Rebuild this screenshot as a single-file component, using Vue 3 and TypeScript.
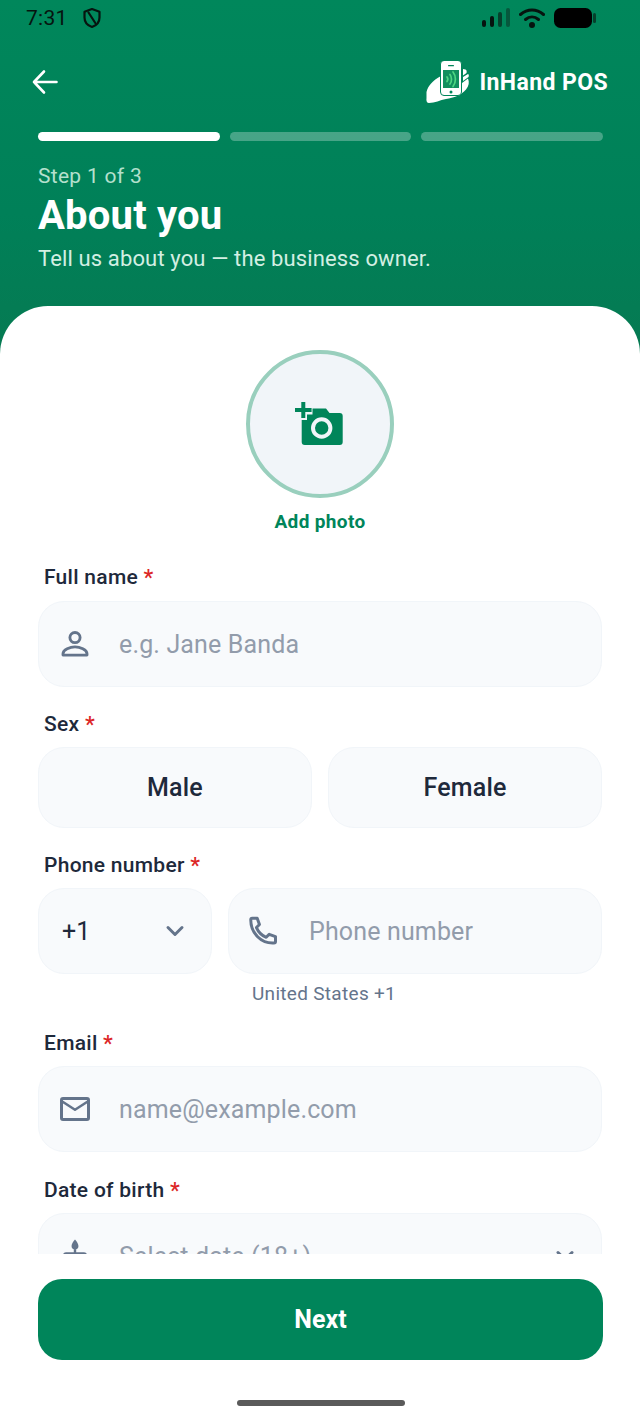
<script setup lang="ts">
const steps = [true, false, false]
</script>

<template>
  <div class="screen">
    <div class="scroll">
      <header class="hero">
        <div class="status">
          <div class="status-left">
            <span class="time">7:31</span>
            <svg class="shield" width="20" height="22" viewBox="0 0 20 22" fill="none" stroke="#06140f" stroke-width="2.2" stroke-linejoin="round">
              <path d="M10 2l7.500 2.800v5.600c0 4.600-3.100 8-7.500 9.600-4.400-1.600-7.500-5-7.500-9.600V4.800z" />
              <path d="M6.500 5.500l6.800 10.500" stroke-linecap="round" />
            </svg>
          </div>
          <div class="status-right">
            <svg width="28" height="20" viewBox="0 0 28 20">
              <rect x="0" y="12" width="4" height="7" rx="2" fill="#06140f" />
              <rect x="8" y="8" width="4" height="11" rx="2" fill="#06140f" />
              <rect x="16" y="4" width="4" height="15" rx="2" fill="#06402c" />
              <rect x="24" y="0" width="4" height="19" rx="2" fill="#06583d" />
            </svg>
            <svg width="26" height="20" viewBox="0 0 26 20" fill="none" stroke="#06140f" stroke-width="3" stroke-linecap="round">
              <path d="M1.500 6.500C8.500 .5 17.500 .5 24.500 6.500" />
              <path d="M6.500 11.500c4-3.400 9-3.400 13 0" />
              <circle cx="13" cy="17" r="1.500" fill="#06140f" />
            </svg>
            <svg width="42" height="20" viewBox="0 0 42 20">
              <rect x="0" y="0" width="38" height="20" rx="6.500" fill="#000" />
              <rect x="39" y="5" width="3" height="10" rx="1.500" fill="#06402c" />
            </svg>
          </div>
        </div>

        <div class="topbar">
          <svg class="back" width="26" height="26" viewBox="0 0 26 26" fill="none" stroke="#fff" stroke-width="2.600" stroke-linecap="round" stroke-linejoin="round">
            <path d="M24.500 13H2M12 2.500L2 13 12 23.500" />
          </svg>
          <div class="brand">
            <svg width="44" height="42" viewBox="0 0 44 42">
              <path d="M.5 31C2 25 6.500 19.500 15 15V30C15 33 17 35 20 35H27C30 35 32 34 35 31L36 22L42 17.500C43.500 21 43 25 40 28.500C35 34.500 28 36.500 20 38C14 39 9 42 3 42C1 42 0 40 .5 37Z" fill="#fff" />
              <path d="M37 8L39.500 8.500C40.500 9 41 10 40.500 12L37 14.500ZM37 16L42 13C43 13.500 43 15 42.500 16L37 20Z" fill="#fff" />
              <rect x="14.500" y="-.5" width="21" height="35" rx="3.500" fill="#fff" stroke="#00855a" stroke-width="1" />
              <rect x="17" y="9" width="16" height="18" fill="#128f5e" />
              <rect x="22" y="4" width="6" height="1.300" rx=".6" fill="#00855a" />
              <circle cx="25" cy="31" r="1.500" fill="#00855a" />
              <g fill="none" stroke="#4fd683" stroke-width="1.700" stroke-linecap="round">
                <path d="M21 16c1 1.200 1 3 0 4.500" />
                <path d="M24 13.500c2 2.800 2 7 0 9.500" />
                <path d="M27 11c3.200 4 3.200 10.500 0 14.500" />
              </g>
            </svg>
            <span class="brand-name">InHand POS</span>
          </div>
        </div>

        <div class="progress">
          <span v-for="(on, i) in steps" :key="i" class="seg" :class="{ on }"></span>
        </div>

        <p class="step">Step 1 of 3</p>
        <h1 class="title">About you</h1>
        <p class="sub">Tell us about you — the business owner.</p>
      </header>

      <main class="sheet">
        <div class="photo">
          <div class="avatar">
            <svg width="50" height="44" viewBox="0 0 50 44">
              <path d="M6.700 18H12V12.500H17.500V6.500H31L34.500 11H44.700A3 3 0 0 1 47.700 14V40A3 3 0 0 1 44.700 43H9.700A3 3 0 0 1 6.700 40Z" fill="#00855a" />
              <path d="M6.300 0H10.300V6H16.600V10H10.300V16H6.300V10H0V6H6.300Z" fill="#00855a" />
              <circle cx="26.700" cy="26" r="8.700" fill="none" stroke="#f1f5f9" stroke-width="4" />
            </svg>
          </div>
          <span class="photo-label">Add photo</span>
        </div>

        <label class="label">Full name <em>*</em></label>
        <div class="field">
          <svg class="ic" width="36" height="36" viewBox="0 0 24 24" fill="none" stroke="#64748b" stroke-width="1.900">
            <circle cx="12" cy="7.700" r="3.400" />
            <path d="M4 19.400v-.9c0-2.700 4.800-4.600 8-4.600s8 1.900 8 4.600v.9z" stroke-linejoin="round" />
          </svg>
          <span class="ph">e.g. Jane Banda</span>
        </div>

        <label class="label">Sex <em>*</em></label>
        <div class="choices">
          <button class="choice">Male</button>
          <button class="choice">Female</button>
        </div>

        <label class="label">Phone number <em>*</em></label>
        <div class="phone-row">
          <div class="field code">
            <span class="code-val">+1</span>
            <svg width="24" height="24" viewBox="0 0 24 24" fill="none" stroke="#64748b" stroke-width="3" stroke-linecap="round" stroke-linejoin="round">
              <path d="M5 8.500l7 7 7-7" />
            </svg>
          </div>
          <div class="phone-col">
            <div class="field">
              <svg class="ic" width="36" height="36" viewBox="0 0 24 24" fill="none" stroke="#64748b" stroke-width="2" stroke-linejoin="round">
                <path transform="translate(-1 0)" d="M4.500 3.500h3.300l1.500 4.200-2 2c1.200 2.800 3.700 5.300 6.500 6.500l2-2 4.200 1.500v3.300c0 .6-.4 1-1 1C10.500 20.500 3.500 13.500 3.500 4.500c0-.6.4-1 1-1z" />
              </svg>
              <span class="ph">Phone number</span>
            </div>
            <span class="hint">United States +1</span>
          </div>
        </div>

        <label class="label email">Email <em>*</em></label>
        <div class="field">
          <svg class="ic" width="36" height="36" viewBox="0 0 24 24" fill="none" stroke="#64748b" stroke-width="2" stroke-linejoin="round">
            <rect x="3" y="5" width="18" height="14" rx="1" />
            <path d="M3.500 7l8.500 5.500L20.500 7" stroke-width="1.700" />
          </svg>
          <span class="ph">name@example.com</span>
        </div>

        <label class="label dob">Date of birth <em>*</em></label>
        <div class="field">
          <svg class="ic" width="36" height="36" viewBox="0 0 24 24" fill="#64748b">
            <path d="M12 1c1.200 1.400 2.300 2.900 2.300 4.400a2.300 2.300 0 0 1-4.600 0C9.700 3.900 10.800 2.400 12 1zM11.200 7.500h1.600V9.500H18a2 2 0 0 1 2 2V20H4v-8.500a2 2 0 0 1 2-2h5.200z" />
          </svg>
          <span class="ph grow">Select date (18+)</span>
          <svg width="24" height="24" viewBox="0 0 24 24" fill="none" stroke="#64748b" stroke-width="3" stroke-linecap="round" stroke-linejoin="round">
            <path d="M5 8.500l7 7 7-7" />
          </svg>
        </div>
      </main>
    </div>

    <footer class="footer">
      <button class="next">Next</button>
      <span class="home"></span>
    </footer>
  </div>
</template>

<style>
html, body { margin: 0; background: #fff; }
</style>

<style scoped>
.screen {
  width: 640px;
  height: 1422px;
  display: flex;
  flex-direction: column;
  overflow: hidden;
  background: #fff;
  font-family: Roboto, "Noto Sans", sans-serif;
}

.scroll {
  flex: 1;
  min-height: 0;
  overflow: hidden;
}

.hero {
  height: 354px;
  box-sizing: border-box;
  padding: 0 37px 0 38px;
  background: linear-gradient(180deg, #00875b 0%, #008058 60%, #067a52 100%);
  color: #fff;
}

.status {
  height: 36px;
  margin: 0 7px 0 -12px;
  display: flex;
  justify-content: space-between;
  align-items: center;
}
.status-left { display: flex; align-items: center; gap: 14px; }
.status-right { display: flex; align-items: center; gap: 9px; }
.time { font-size: 21px; color: #06140f; letter-spacing: .3px; }

.topbar {
  height: 46px;
  margin: 23px -5px 0 -6px;
  display: flex;
  justify-content: space-between;
  align-items: center;
}
.brand { display: flex; align-items: center; gap: 9px; }
.brand-name { font-size: 23px; font-weight: 700; letter-spacing: .4px; }

.progress {
  display: flex;
  gap: 10px;
  margin-top: 27px;
}
.seg {
  flex: 1;
  height: 9px;
  border-radius: 5px;
  background: rgba(255, 255, 255, .28);
}
.seg.on { background: #fff; }

.step {
  margin: 22px 0 0;
  font-size: 21px;
  line-height: 26px;
  letter-spacing: .3px;
  color: #b4e0cd;
}
.title {
  margin: 4px 0 0;
  font-size: 40px;
  line-height: 46px;
  font-weight: 700;
  letter-spacing: .2px;
}
.sub {
  margin: 6px 0 0;
  font-size: 22px;
  line-height: 28px;
  letter-spacing: .13px;
  color: #d3efe3;
}

.sheet {
  margin-top: -48px;
  padding: 44px 38px 0;
  position: relative;
  background: #fff;
  border-radius: 48px 48px 0 0;
}

.photo {
  display: flex;
  flex-direction: column;
  align-items: center;
}
.avatar {
  width: 148px;
  height: 148px;
  box-sizing: border-box;
  display: flex;
  align-items: center;
  justify-content: center;
  border: 4px solid #99cfbd;
  border-radius: 50%;
  background: #f1f5f9;
}
.photo-label {
  margin-top: 13px;
  font-size: 19px;
  line-height: 22px;
  font-weight: 700;
  letter-spacing: .35px;
  color: #00855a;
}

.label {
  display: block;
  margin: 24px 0 10px 6px;
  font-size: 21px;
  line-height: 26px;
  font-weight: 500;
  letter-spacing: .28px;
  color: #1e293b;
}
.photo + .label { margin: 31px 0 11px 6px; }
.label em {
  font-style: normal;
  font-size: 22px;
  line-height: 20px;
  vertical-align: -1px;
  color: #dc2626;
}
.label.email { margin-top: 23px; }
.label.dob { margin-top: 25px; }

.field {
  height: 86px;
  box-sizing: border-box;
  display: flex;
  align-items: center;
  padding: 0 24px 0 18px;
  border: 1.500px solid #f1f5f9;
  border-radius: 26px;
  background: #f8fafc;
}
.ic { flex: none; }
.ph {
  margin-left: 26px;
  font-size: 25px;
  letter-spacing: .15px;
  color: #929cab;
}
.grow { flex: 1; }

.choices {
  display: flex;
  gap: 16px;
}
.choice {
  flex: 1;
  height: 81px;
  border: 1.500px solid #f1f5f9;
  border-radius: 26px;
  background: #f8fafc;
  font-family: inherit;
  font-size: 25px;
  font-weight: 500;
  letter-spacing: .2px;
  color: #1e293b;
}

.phone-row {
  display: flex;
  gap: 16px;
}
.code {
  flex: none;
  width: 174px;
  justify-content: space-between;
  padding: 0 24px 0 23px;
}
.code-val { font-size: 25px; color: #1e293b; }
.phone-col { flex: 1; min-width: 0; }
.hint {
  display: block;
  margin-top: 7px;
  padding-left: 24px;
  font-size: 19px;
  line-height: 26px;
  letter-spacing: .3px;
  color: #64748b;
}

.footer {
  flex: none;
  height: 168px;
  box-sizing: border-box;
  padding: 25px 37px 0 38px;
  background: #fff;
  display: flex;
  flex-direction: column;
  align-items: center;
}
.next {
  width: 100%;
  height: 81px;
  border: 0;
  border-radius: 24px;
  background: #00855a;
  color: #fff;
  font-family: inherit;
  font-size: 25px;
  font-weight: 700;
}
.home {
  width: 168px;
  height: 6px;
  margin-top: 40px;
  border-radius: 3px;
  background: #5a5a5a;
}
</style>
